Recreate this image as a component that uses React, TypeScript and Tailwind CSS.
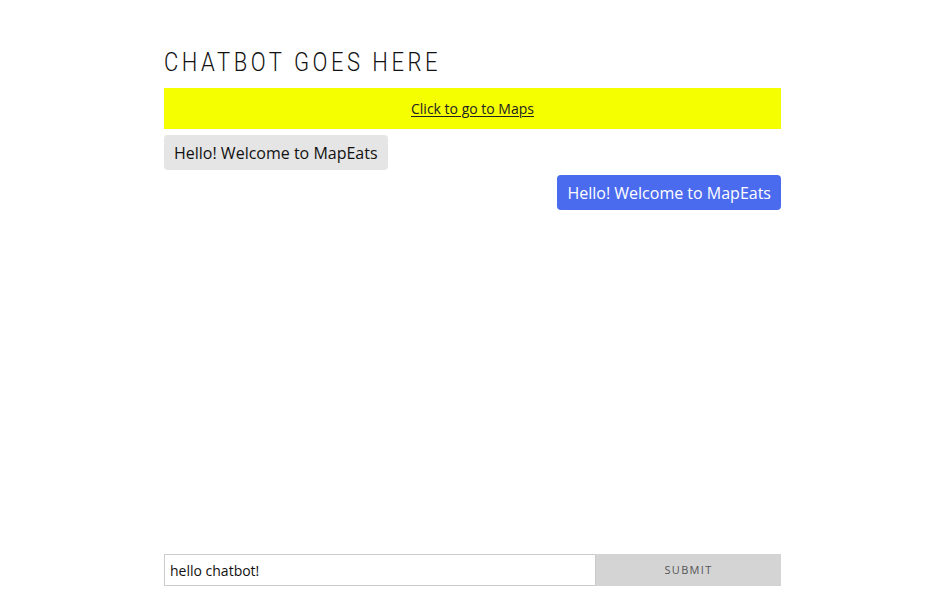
import { useState } from 'react'

type Message = { from: 'bot' | 'user'; text: string }

const MESSAGES: Message[] = [
  { from: 'bot', text: 'Hello! Welcome to MapEats' },
  { from: 'user', text: 'Hello! Welcome to MapEats' },
]

export default function App() {
  const [value, setValue] = useState('hello chatbot!')

  return (
    <div className="h-screen bg-white flex flex-col font-['Open_Sans',sans-serif]">
      <div className="w-[617px] ml-[164px] flex flex-col flex-1 pb-[18px]">
        <h1 className="mt-[48px] text-[25px] leading-[30px] font-light tracking-[0.16em] text-[#111] font-['Roboto',sans-serif] [transform:scaleX(0.88)] origin-left">
          CHATBOT GOES HERE
        </h1>

        <div className="mt-[10px] h-[41px] bg-[#f5ff00] flex items-center justify-center">
          <a href="#" className="text-[14px] text-[#222] underline underline-offset-2">
            Click to go to Maps
          </a>
        </div>

        <div className="flex-1 flex flex-col gap-[5px] pt-[6px]">
          {MESSAGES.map((m, i) => (
            <div key={i} className={m.from === 'bot' ? 'flex justify-start' : 'flex justify-end'}>
              <div
                className={`px-[10px] h-[35px] flex items-center rounded-[4px] text-[16px] ${
                  m.from === 'bot' ? 'bg-[#e5e5e5] text-[#111]' : 'bg-[#4b6bef] text-white'
                }`}
              >
                {m.text}
              </div>
            </div>
          ))}
        </div>

        <form className="flex h-[32px]" onSubmit={e => e.preventDefault()}>
          <input
            value={value}
            onChange={e => setValue(e.target.value)}
            className="flex-1 border border-[#ccc] px-[5px] text-[14px] text-[#111] outline-none"
          />
          <button
            type="submit"
            className="w-[185px] bg-[#d4d4d4] text-[11px] tracking-[0.12em] text-[#555]"
          >
            SUBMIT
          </button>
        </form>
      </div>
    </div>
  )
}
